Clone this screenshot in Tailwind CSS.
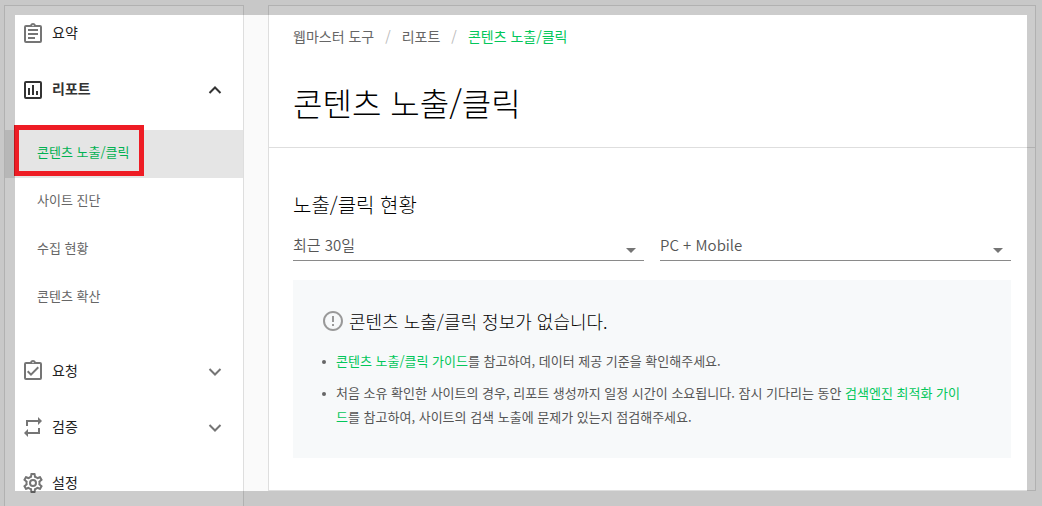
<!DOCTYPE html>
<html lang="ko">
<head>
<meta charset="utf-8">
<meta name="viewport" content="width=device-width, initial-scale=1">
<title>콘텐츠 노출/클릭</title>
<script src="https://cdn.jsdelivr.net/npm/@tailwindcss/browser@4"></script>
</head>
<body class="bg-[#fafafa] font-['Noto_Sans_CJK_KR',sans-serif] text-[#222] h-screen overflow-hidden">
<div class="flex h-full gap-6 pt-[5px] pl-1 pr-1.5 items-start">
  <nav class="w-60 shrink-0 self-stretch overflow-hidden border border-b-0 border-[#dedede] bg-white">
    <a href="#" class="flex h-14 items-center gap-[7px] pl-4 text-sm">
      <svg class="size-6 text-[#757575]" viewBox="0 0 24 24" fill="currentColor"><path d="M7 15h7v2H7zm0-4h10v2H7zm0-4h10v2H7zm12-4h-4.180C14.400 1.840 13.300 1 12 1s-2.400.84-2.820 2H5a2 2 0 0 0-2 2v14a2 2 0 0 0 2 2h14a2 2 0 0 0 2-2V5a2 2 0 0 0-2-2zm-7-.25c.41 0 .75.34.75.75s-.34.75-.75.75-.75-.34-.75-.75.34-.75.75-.75zM19 19H5V5h14v14z"/></svg>
      <span class="pb-1">요약</span>
    </a>
    <button type="button" class="flex h-14 w-full items-center gap-[7px] pl-4 pr-4 text-left text-sm font-bold text-[#333]" aria-expanded="true">
      <svg class="size-6" viewBox="0 0 24 24" fill="currentColor"><path d="M9 17H7v-7h2v7zm4 0h-2V7h2v10zm4 0h-2v-4h2v4zm2 2H5V5h14v14zm0-16H5a2 2 0 0 0-2 2v14a2 2 0 0 0 2 2h14a2 2 0 0 0 2-2V5a2 2 0 0 0-2-2z"/></svg>
      <span class="flex-1 pb-1">리포트</span>
      <svg class="size-6" viewBox="0 0 24 24" fill="none" stroke="currentColor" stroke-width="2"><path d="M6.500 15 12 9.500l5.500 5.500"/></svg>
    </button>
    <ul class="mt-3 mb-[21px] text-[13px] text-[#666]">
      <li class="relative"><a href="#" class="flex h-12 items-center bg-[#e5e5e5] pb-1 pl-8 text-[#03b152]" aria-current="page">콘텐츠 노출/클릭</a>
        <span class="pointer-events-none absolute -top-[5px] left-[9px] h-[51px] w-[130px] border-5 border-[#ee1c24]"></span></li>
      <li><a href="#" class="flex h-12 items-center pb-1 pl-8">사이트 진단</a></li>
      <li><a href="#" class="flex h-12 items-center pb-1 pl-8">수집 현황</a></li>
      <li><a href="#" class="flex h-12 items-center pb-1 pl-8">콘텐츠 확산</a></li>
    </ul>
    <button type="button" class="flex h-14 w-full items-center gap-[7px] pl-4 pr-4 text-left text-sm" aria-expanded="false">
      <svg class="size-6 text-[#757575]" viewBox="0 0 24 24" fill="currentColor"><path d="M19 3h-4.180C14.400 1.840 13.300 1 12 1s-2.400.84-2.820 2H5a2 2 0 0 0-2 2v14a2 2 0 0 0 2 2h14a2 2 0 0 0 2-2V5a2 2 0 0 0-2-2zm-7-.25c.41 0 .75.34.75.75s-.34.75-.75.75-.75-.34-.75-.75.34-.75.75-.75zM19 19H5V5h14v14zM17.990 9l-1.410-1.420-6.590 6.590-2.580-2.570-1.420 1.410 4 3.990z"/></svg>
      <span class="flex-1 pb-0.5">요청</span>
      <svg class="size-6 text-[#757575]" viewBox="0 0 24 24" fill="none" stroke="currentColor" stroke-width="2"><path d="M6.500 10 12 15.500l5.500-5.500"/></svg>
    </button>
    <button type="button" class="flex h-14 w-full items-center gap-[7px] pl-4 pr-4 text-left text-sm" aria-expanded="false">
      <svg class="size-6 text-[#757575]" viewBox="0 0 24 24" fill="currentColor"><path d="M7 7h10v3l4-4-4-4v3H5v6h2V7zm10 10H7v-3l-4 4 4 4v-3h12v-6h-2v4z"/></svg>
      <span class="flex-1 pb-0.5">검증</span>
      <svg class="size-6 text-[#757575]" viewBox="0 0 24 24" fill="none" stroke="currentColor" stroke-width="2"><path d="M6.500 10 12 15.500l5.500-5.500"/></svg>
    </button>
    <a href="#" class="flex h-14 items-center gap-[7px] pl-4 text-sm">
      <svg class="size-6 text-[#757575]" viewBox="0 0 24 24" fill="currentColor"><path d="M19.430 12.980c.04-.32.07-.64.07-.98 0-.34-.03-.66-.07-.98l2.110-1.650c.19-.15.24-.42.12-.64l-2-3.460a.5.5 0 0 0-.61-.22l-2.490 1c-.52-.4-1.080-.73-1.690-.98l-.38-2.650A.488.488 0 0 0 14 2h-4c-.25 0-.46.18-.49.42l-.38 2.650c-.61.25-1.170.59-1.690.98l-2.490-1a.5.5 0 0 0-.61.22l-2 3.460c-.13.22-.07.49.12.64l2.110 1.650c-.04.32-.07.65-.07.98s.03.66.07.98l-2.110 1.650c-.19.15-.24.42-.12.64l2 3.460c.12.22.39.3.61.22l2.490-1c.52.4 1.080.73 1.690.98l.38 2.650c.03.24.24.42.49.42h4c.25 0 .46-.18.49-.42l.38-2.650c.61-.25 1.170-.59 1.690-.98l2.490 1c.23.09.49 0 .61-.22l2-3.460c.12-.22.07-.49-.12-.64l-2.110-1.650zm-1.980-1.710c.04.31.05.52.05.73s-.02.43-.05.73l-.14 1.130.89.7 1.080.84-.7 1.210-1.270-.51-1.040-.42-.9.680c-.43.32-.84.56-1.250.73l-1.060.43-.16 1.130-.2 1.350h-1.400l-.19-1.350-.16-1.130-1.060-.43c-.43-.18-.83-.41-1.230-.71l-.91-.7-1.060.43-1.270.51-.7-1.210 1.080-.84.89-.7-.14-1.130c-.03-.31-.05-.54-.05-.74s.02-.43.05-.73l.14-1.130-.89-.7-1.080-.84.7-1.210 1.270.51 1.040.42.9-.68c.43-.32.84-.56 1.250-.73l1.060-.43.16-1.130.2-1.350h1.390l.19 1.350.16 1.130 1.060.43c.43.18.83.41 1.230.71l.91.7 1.060-.43 1.270-.51.7 1.210-1.070.85-.89.7.14 1.130zM12 8a4 4 0 1 0 0 8 4 4 0 0 0 0-8zm0 6a2 2 0 1 1 0-4 2 2 0 0 1 0 4z"/></svg>
      <span class="pb-0.5">설정</span>
    </a>
  </nav>

  <main class="min-w-0 flex-1 border border-[#dedede] bg-white">
    <header class="border-b border-[#dedede] px-6 pt-[18px] pb-[22px]">
      <nav class="flex gap-[11px] text-sm leading-6 text-[#666]" aria-label="경로">
        <a href="#">웹마스터 도구</a><span class="text-[#bbb]">/</span><a href="#">리포트</a><span class="text-[#bbb]">/</span><a href="#" class="text-[#03c75a]">콘텐츠 노출/클릭</a>
      </nav>
      <h1 class="mt-8 text-[32px] leading-[45px] font-light text-black">콘텐츠 노출/클릭</h1>
    </header>
    <section class="px-6 pt-[41px] pb-8">
      <h2 class="text-xl leading-8 font-light text-black">노출/클릭 현황</h2>
      <div class="mt-[7px] grid grid-cols-2 gap-4 text-[15px] text-[#555]">
        <div class="relative border-b border-[#8a8a8a]">
          <select aria-label="기간" class="block h-8 w-full appearance-none bg-transparent pt-0.5 font-[350]"><option>최근 30일</option></select>
          <svg class="pointer-events-none absolute right-2 bottom-[7px] h-[5px] w-[10px]" viewBox="0 0 10 5" fill="#757575"><path d="M0 0h10L5 5z"/></svg>
        </div>
        <div class="relative border-b border-[#8a8a8a]">
          <select aria-label="기기" class="block h-8 w-full appearance-none bg-transparent pt-0.5 font-[350]"><option>PC + Mobile</option></select>
          <svg class="pointer-events-none absolute right-2 bottom-[7px] h-[5px] w-[10px]" viewBox="0 0 10 5" fill="#757575"><path d="M0 0h10L5 5z"/></svg>
        </div>
      </div>
      <div class="mt-[19px] bg-[#f7f9fa] px-7 pt-[29px] pb-[29px]">
        <h3 class="flex items-center gap-1 text-lg leading-6 font-light text-black">
          <svg class="size-6 text-[#999]" viewBox="0 0 24 24" fill="currentColor"><path d="M11 15h2v2h-2zm0-8h2v6h-2zm.99-5C6.470 2 2 6.480 2 12s4.470 10 9.990 10C17.520 22 22 17.520 22 12S17.520 2 11.990 2zM12 20a8 8 0 1 1 0-16 8 8 0 0 1 0 16z"/></svg>
          <span>콘텐츠 노출/클릭 정보가 없습니다.</span>
        </h3>
        <ul class="mt-4 space-y-2 pr-4 text-[13px] leading-6 text-[#555]">
          <li class="flex gap-2.5 break-all"><span class="mt-[11px] ml-px size-1 shrink-0 rounded-full bg-[#666]"></span><p><a href="#" class="text-[#03c75a]">콘텐츠 노출/클릭 가이드</a>를 참고하여, 데이터 제공 기준을 확인해주세요.</p></li>
          <li class="flex gap-2.5 break-all"><span class="mt-[11px] ml-px size-1 shrink-0 rounded-full bg-[#666]"></span><p>처음 소유 확인한 사이트의 경우, 리포트 생성까지 일정 시간이 소요됩니다. 잠시 기다리는 동안 <a href="#" class="text-[#03c75a]">검색엔진 최적화 가이드</a>를 참고하여, 사이트의 검색 노출에 문제가 있는지 점검해주세요.</p></li>
        </ul>
      </div>
    </section>
  </main>
</div>
<div class="pointer-events-none fixed inset-0 border-15 border-black/20"></div>
</body>
</html>
